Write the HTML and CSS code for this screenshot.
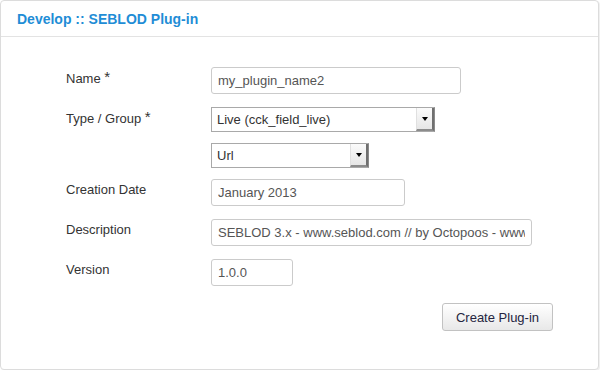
FILE: index.html
```html
<!DOCTYPE html>
<html lang="en">
<head>
    <meta charset="UTF-8">
    <title>Develop :: SEBLOD Plug-in</title>
    <link rel="stylesheet" href="styles.css">
</head>
<body>
    <div class="panel">
        <div class="panel-header">
            <h3>Develop :: SEBLOD Plug-in</h3>
        </div>

        <form class="panel-body">
            <div class="row">
                <label>Name <span class="star">*</span></label>
                <input type="text" class="field w-name" value="my_plugin_name2">
            </div>

            <div class="row row-select">
                <label>Type / Group <span class="star">*</span></label>
                <div class="select w-type">
                    <span class="select-text">Live (cck_field_live)</span>
                    <span class="select-btn"><i class="arrow"></i></span>
                </div>
            </div>

            <div class="row row-select">
                <label></label>
                <div class="select w-url">
                    <span class="select-text">Url</span>
                    <span class="select-btn"><i class="arrow"></i></span>
                </div>
            </div>

            <div class="row">
                <label>Creation Date</label>
                <input type="text" class="field w-date" value="January 2013">
            </div>

            <div class="row">
                <label>Description</label>
                <input type="text" class="field w-desc" value="SEBLOD 3.x - www.seblod.com // by Octopoos - www.octopoos.com">
            </div>

            <div class="row">
                <label>Version</label>
                <input type="text" class="field w-version" value="1.0.0">
            </div>

            <div class="actions">
                <button type="button" class="btn">Create Plug-in</button>
            </div>
        </form>
    </div>
</body>
</html>
```

FILE: styles.css
```css
body {
    margin: 0;
    background: #fff;
    font-family: "Liberation Sans", Arial, sans-serif;
    color: #333;
}

.panel {
    width: 597px;
    height: 368px;
    border: 1px solid #dcdcdc;
    border-radius: 4px;
    box-shadow: 1px 1px 0 #f0f0f0;
    background: #fff;
}

.panel-header {
    height: 35px;
    border-bottom: 1px solid #e3e3e3;
    padding-left: 16px;
}

.panel-header h3 {
    margin: 0;
    padding-top: 9px;
    font-size: 14px;
    line-height: 18px;
    font-weight: bold;
    color: #1f8dd6;
}

.panel-body {
    padding: 30px 45px 0 65px;
}

.row {
    display: flex;
    align-items: flex-start;
    margin-bottom: 13px;
}

.row-select {
    margin-bottom: 11px;
}

.row label {
    width: 145px;
    flex: none;
    font-size: 13px;
    line-height: 18px;
    padding-top: 2px;
}

.star {
    font-size: 15px;
    position: relative;
    top: -1px;
}

.field {
    box-sizing: border-box;
    height: 27px;
    margin: 0;
    padding: 0 6px;
    border: 1px solid #cbcbcb;
    border-radius: 3px;
    font-family: "Liberation Sans", Arial, sans-serif;
    font-size: 13px;
    color: #555;
    background: #fff;
    outline: none;
}

.w-name { width: 250px; }
.w-date { width: 194px; }
.w-desc { width: 321px; }
.w-version { width: 82px; }

.select {
    box-sizing: border-box;
    height: 25px;
    display: flex;
    align-items: stretch;
    border: 1px solid #a9a9a9;
    border-right-color: #8a8a8a;
    background: #fff;
}

.w-type { width: 224px; }
.w-url { width: 158px; }

.select-text {
    flex: 1;
    padding-left: 5px;
    font-size: 13px;
    line-height: 23px;
    color: #333;
    white-space: nowrap;
    overflow: hidden;
}

.select-btn {
    width: 15px;
    display: flex;
    align-items: center;
    justify-content: center;
    background: linear-gradient(#fbfbfb, #e6e6e6);
    border-left: 1px solid #e0e0e0;
    border-right: 2px solid #6f6f6f;
    border-bottom: 2px solid #8c8c8c;
}

.arrow {
    width: 0;
    height: 0;
    border-left: 3px solid transparent;
    border-right: 3px solid transparent;
    border-top: 4px solid #000;
}

.actions {
    display: flex;
    justify-content: flex-end;
    padding-top: 4px;
}

.btn {
    box-sizing: border-box;
    width: 111px;
    height: 28px;
    border: 1px solid #c2c2c2;
    border-radius: 3px;
    background: linear-gradient(#ffffff, #e8e8e8);
    font-family: "Liberation Sans", Arial, sans-serif;
    font-size: 13px;
    color: #252540;
    padding: 0;
}
```
